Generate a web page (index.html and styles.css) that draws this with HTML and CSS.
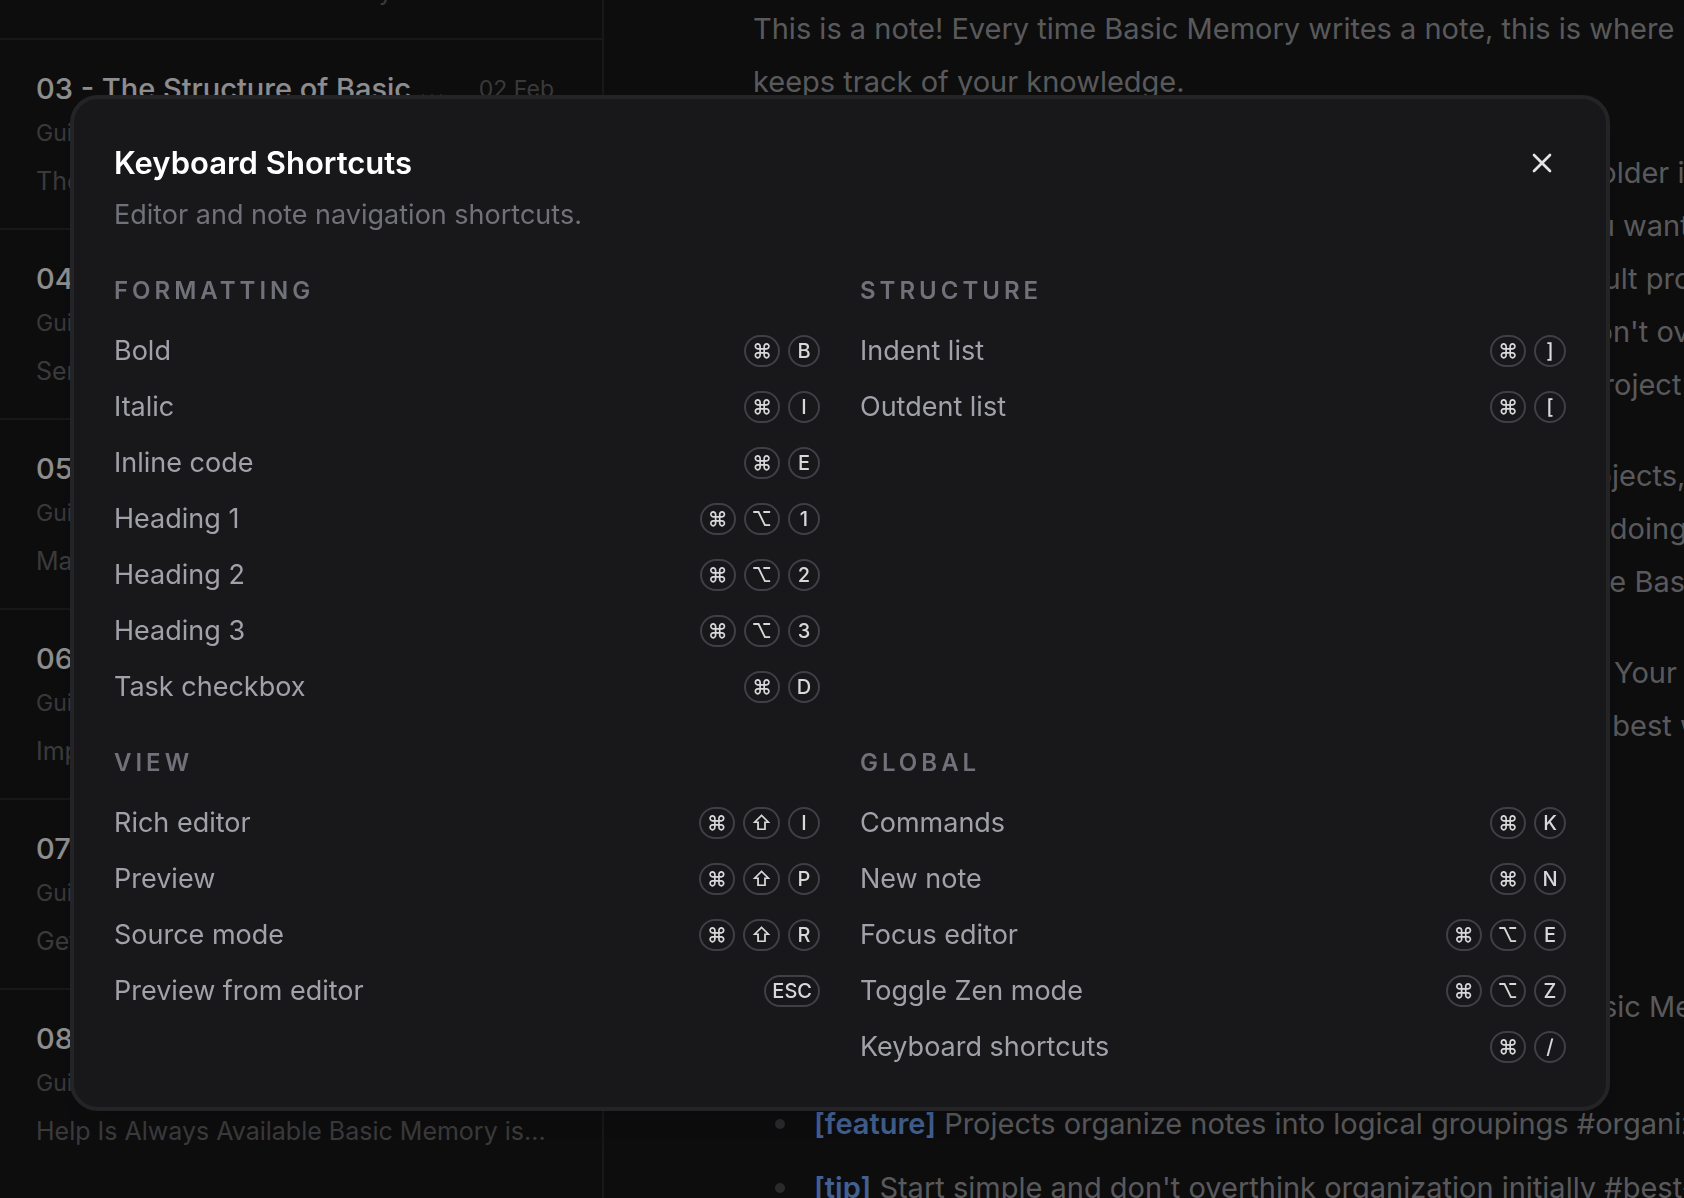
FILE: index.html
```html
<!DOCTYPE html>
<html lang="en">
<head>
  <meta charset="UTF-8">
  <meta name="viewport" content="width=device-width, initial-scale=1.0">
  <title>Basic Memory</title>
  <link rel="stylesheet" href="styles.css">
</head>
<body>
  <div class="app">
    <aside class="sidebar">
      <ul class="note-list">
        <li class="note">
          <div class="note-head">
            <h4>02 - Notes</h4>
            <time>02 Feb</time>
          </div>
          <p class="folder">Guides</p>
          <p class="excerpt">Start Here With Basic Memory</p>
        </li>
        <li class="note">
          <div class="note-head">
            <h4>03 - The Structure of Basic Memory</h4>
            <time>02 Feb</time>
          </div>
          <p class="folder">Guides</p>
          <p class="excerpt">The Structure of Notes</p>
        </li>
        <li class="note">
          <div class="note-head">
            <h4>04 - Search</h4>
            <time>02 Feb</time>
          </div>
          <p class="folder">Guides</p>
          <p class="excerpt">Semantic Search</p>
        </li>
        <li class="note">
          <div class="note-head">
            <h4>05 - Projects</h4>
            <time>02 Feb</time>
          </div>
          <p class="folder">Guides</p>
          <p class="excerpt">Managing Projects</p>
        </li>
        <li class="note">
          <div class="note-head">
            <h4>06 - Importing</h4>
            <time>02 Feb</time>
          </div>
          <p class="folder">Guides</p>
          <p class="excerpt">Import Your Notes</p>
        </li>
        <li class="note">
          <div class="note-head">
            <h4>07 - Next Steps</h4>
            <time>02 Feb</time>
          </div>
          <p class="folder">Guides</p>
          <p class="excerpt">Getting More Done</p>
        </li>
        <li class="note">
          <div class="note-head">
            <h4>08 - Help</h4>
            <time>02 Feb</time>
          </div>
          <p class="folder">Guides</p>
          <p class="excerpt">Help Is Always Available Basic Memory is...</p>
        </li>
      </ul>
    </aside>

    <main class="editor">
      <p>
        This is a note! Every time Basic Memory writes a note, this is where it<br>
        keeps track of your knowledge.
      </p>
      <p>
        This project is a group of related notes in a local folder. Each folder is<br>
        keeps all of its own files, and you can create another when you want<br>
        to keep notes separate, but Basic Memory starts with the default project<br>
        named main and most people may only need any more, and don't overthink<br>
        plan it all. You can easily copy your notes later on into a new project
      </p>
      <p>
        Some people like to have one space and others have many projects,<br>
        such as research, one for writing. Start with what you are now doing<br>
        and then see it expand as you go. To change projects, show the Basic
      </p>
      <p>
        The project menu has all of the project that you created so far. Your notes<br>
        notes stay right where you put them, and you pick what works best with
      </p>
      <h2>Observations</h2>
      <ul class="observations">
        <li><strong>[concept]</strong> Projects are folders</li>
        <li>
          Each project is one folder for related notes and links in Basic Memory<br>
          and can be synced
        </li>
        <li><strong>[feature]</strong> Projects organize notes into logical groupings #organization</li>
        <li><strong>[tip]</strong> Start simple and don't overthink organization initially #best-practice</li>
      </ul>
    </main>
  </div>

  <div class="overlay">
    <div class="modal" role="dialog" aria-modal="true" aria-labelledby="modal-title">
      <header class="modal-header">
        <div>
          <h1 id="modal-title">Keyboard Shortcuts</h1>
          <p>Editor and note navigation shortcuts.</p>
        </div>
        <button class="close-button" type="button" aria-label="Close">
          <svg viewBox="0 0 24 24" fill="none" stroke="currentColor" stroke-width="2" stroke-linecap="round" stroke-linejoin="round">
            <path d="M18 6 6 18M6 6l12 12"/>
          </svg>
        </button>
      </header>

      <div class="groups">
        <section class="group">
          <h3>Formatting</h3>
          <ul>
            <li><span>Bold</span><span class="keys"><kbd>⌘</kbd><kbd>B</kbd></span></li>
            <li><span>Italic</span><span class="keys"><kbd>⌘</kbd><kbd>I</kbd></span></li>
            <li><span>Inline code</span><span class="keys"><kbd>⌘</kbd><kbd>E</kbd></span></li>
            <li><span>Heading 1</span><span class="keys"><kbd>⌘</kbd><kbd>⌥</kbd><kbd>1</kbd></span></li>
            <li><span>Heading 2</span><span class="keys"><kbd>⌘</kbd><kbd>⌥</kbd><kbd>2</kbd></span></li>
            <li><span>Heading 3</span><span class="keys"><kbd>⌘</kbd><kbd>⌥</kbd><kbd>3</kbd></span></li>
            <li><span>Task checkbox</span><span class="keys"><kbd>⌘</kbd><kbd>D</kbd></span></li>
          </ul>
        </section>

        <section class="group">
          <h3>Structure</h3>
          <ul>
            <li><span>Indent list</span><span class="keys"><kbd>⌘</kbd><kbd>]</kbd></span></li>
            <li><span>Outdent list</span><span class="keys"><kbd>⌘</kbd><kbd>[</kbd></span></li>
          </ul>
        </section>

        <section class="group">
          <h3>View</h3>
          <ul>
            <li><span>Rich editor</span><span class="keys"><kbd>⌘</kbd><kbd>⇧</kbd><kbd>I</kbd></span></li>
            <li><span>Preview</span><span class="keys"><kbd>⌘</kbd><kbd>⇧</kbd><kbd>P</kbd></span></li>
            <li><span>Source mode</span><span class="keys"><kbd>⌘</kbd><kbd>⇧</kbd><kbd>R</kbd></span></li>
            <li><span>Preview from editor</span><span class="keys"><kbd>ESC</kbd></span></li>
          </ul>
        </section>

        <section class="group">
          <h3>Global</h3>
          <ul>
            <li><span>Commands</span><span class="keys"><kbd>⌘</kbd><kbd>K</kbd></span></li>
            <li><span>New note</span><span class="keys"><kbd>⌘</kbd><kbd>N</kbd></span></li>
            <li><span>Focus editor</span><span class="keys"><kbd>⌘</kbd><kbd>⌥</kbd><kbd>E</kbd></span></li>
            <li><span>Toggle Zen mode</span><span class="keys"><kbd>⌘</kbd><kbd>⌥</kbd><kbd>Z</kbd></span></li>
            <li><span>Keyboard shortcuts</span><span class="keys"><kbd>⌘</kbd><kbd>/</kbd></span></li>
          </ul>
        </section>
      </div>
    </div>
  </div>
</body>
</html>
```
FILE: styles.css
```css
* {
  box-sizing: border-box;
  margin: 0;
  padding: 0;
}

body {
  font-family: Inter, "Liberation Sans", sans-serif;
  background-color: #161618;
  color: #959598;
  overflow: hidden;
}

ul {
  list-style: none;
}

.app {
  display: flex;
  height: 100vh;
  overflow: hidden;
}

/* Note list */
.sidebar {
  flex: 0 0 604px;
  border-right: 2px solid #28282b;
  overflow: hidden;
}

/* scrolled partway into the second note */
.note-list {
  margin-top: -150px;
}

.note {
  padding: 31px 48px 29px 36px;
  border-bottom: 2px solid #28282b;
}

.note:last-child {
  border-bottom: none;
}

.note-head {
  display: flex;
  align-items: center;
  gap: 32px;
}

.note h4 {
  flex: 1;
  min-width: 0;
  font-size: 29px;
  font-weight: 500;
  line-height: 36px;
  color: #ececee;
  white-space: nowrap;
  overflow: hidden;
  text-overflow: ellipsis;
}

.note time {
  font-size: 23px;
  color: #606062;
}

.folder {
  margin-top: 10px;
  font-size: 23px;
  line-height: 32px;
  color: #606062;
}

.excerpt {
  margin-top: 14px;
  font-size: 25px;
  line-height: 36px;
  color: #626264;
  white-space: nowrap;
}

/* Note content */
.editor {
  flex: 1;
  min-width: 0;
  padding: 2px 0 0 149px;
  font-size: 29px;
  line-height: 53px;
  white-space: nowrap;
  overflow: hidden;
}

.editor p {
  margin-bottom: 38px;
}

.editor h2 {
  margin: 60px 0 56px;
  font-size: 36px;
  line-height: 48px;
}

.observations li {
  position: relative;
  margin-bottom: 11px;
  padding-left: 61px;
}

.observations li::before {
  content: "";
  position: absolute;
  top: 22px;
  left: 22px;
  width: 10px;
  height: 10px;
  border-radius: 50%;
  background-color: #464649;
}

.observations strong {
  font-weight: 600;
  color: #6ea0f0;
}

/* Shortcuts dialog */
.overlay {
  position: fixed;
  inset: 0;
  display: flex;
  align-items: flex-start;
  justify-content: center;
  padding: 95px 74px 0 70px;
  background-color: rgba(0, 0, 0, 0.4);
}

.modal {
  width: 100%;
  padding: 40px;
  border: 4px solid #242427;
  border-radius: 28px;
  background-color: #18181b;
  box-shadow: 0 20px 30px -10px rgba(0, 0, 0, 0.15);
}

.modal-header {
  display: flex;
  align-items: flex-start;
  justify-content: space-between;
  margin-bottom: 40px;
}

.modal-header h1 {
  font-size: 31px;
  font-weight: 600;
  line-height: 48px;
  color: #fff;
}

.modal-header p {
  margin-top: 8px;
  font-size: 27px;
  line-height: 40px;
  color: #71717a;
}

.close-button {
  display: flex;
  align-items: center;
  justify-content: center;
  width: 48px;
  height: 48px;
  border: none;
  background: none;
  color: #e4e4e7;
  cursor: pointer;
}

.close-button svg {
  width: 32px;
  height: 32px;
}

.groups {
  display: grid;
  grid-template-columns: 1fr 1fr;
  gap: 40px;
}

.group h3 {
  margin-bottom: 24px;
  font-size: 24px;
  font-weight: 600;
  line-height: 32px;
  letter-spacing: 4px;
  text-transform: uppercase;
  color: #71717a;
}

.group ul {
  display: flex;
  flex-direction: column;
  gap: 16px;
}

.group li {
  display: flex;
  align-items: center;
  justify-content: space-between;
  font-size: 27px;
  line-height: 40px;
  color: #a1a1aa;
}

.keys {
  display: flex;
  gap: 8px;
}

kbd {
  min-width: 32px;
  height: 32px;
  padding: 0 6px;
  border: 2px solid #3f3f46;
  border-radius: 16px;
  font-family: inherit;
  font-size: 20px;
  font-weight: 500;
  line-height: 28px;
  text-align: center;
  color: #d8d8db;
}
```
